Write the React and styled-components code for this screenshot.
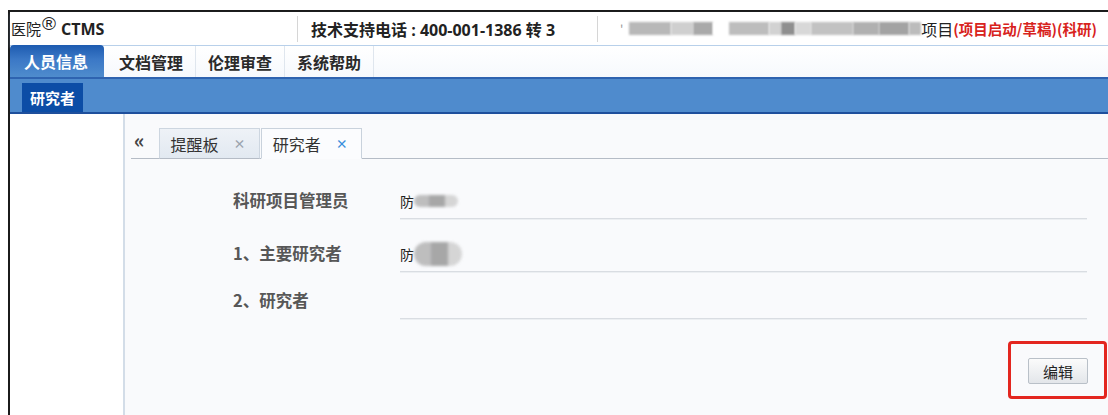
import React from "react";
import styled, { createGlobalStyle } from "styled-components";

const cjk = `"Noto Sans CJK SC", "Noto Sans", sans-serif`;

const GlobalStyle = createGlobalStyle`
  html, body {
    margin: 0;
    padding: 0;
    background: #ffffff;
    font-family: ${cjk};
    overflow: hidden;
  }
`;

// Outer window frame
const Frame = styled.div`
  margin: 10px 0 0 8px;
  border-top: 2px solid #1b1b1b;
  border-left: 2px solid #1b1b1b;
  height: 403px;
  display: flex;
  flex-direction: column;
  background: #fff;
`;

// Top header bar
const Header = styled.div`
  height: 33px;
  display: flex;
  align-items: center;
  border-bottom: 1px solid #b8d0ea;
  box-shadow: 0 2px 3px rgba(150, 185, 225, 0.35);
  white-space: nowrap;
`;

const Brand = styled.div`
  width: 286px;
  display: flex;
  align-items: baseline;
  color: #222;
  font-size: 15px;
  padding-left: 1px;
`;

const Reg = styled.span`
  font-family: "Liberation Sans", sans-serif;
  font-size: 19px;
  line-height: 0;
  margin: 0 5px 0 1px;
  position: relative;
  top: -5px;
`;

const Ctms = styled.b`
  font-family: "Open Sans", ${cjk};
  font-size: 16px;
  font-weight: 700;
`;

const Divider = styled.div`
  width: 1px;
  height: 26px;
  background: #d6d6d6;
`;

const Hotline = styled.div`
  width: 286px;
  padding-left: 13px;
  font-family: "Open Sans", ${cjk};
  font-size: 16px;
  font-weight: 700;
  color: #222;
`;

const Project = styled.div`
  flex: 1;
  display: flex;
  align-items: center;
  padding-left: 22px;
  color: #222;
  font-size: 16px;
`;

const Tick = styled.span`
  color: #999;
  font-size: 12px;
  margin-right: 6px;
`;

const Smudge = styled.span`
  display: inline-block;
  width: ${(p) => p.w}px;
  height: 13px;
  background: ${(p) => p.c};
  filter: blur(1.2px);
`;

const Status = styled.span`
  color: #d8231d;
  font-size: 14.5px;
  font-weight: 700;
  align-self: flex-end;
  margin-bottom: 2px;
`;

// Module tabs
const TabRow = styled.div`
  height: 31px;
  display: flex;
  align-items: flex-end;
  background: linear-gradient(#ffffff, #f6f9fd);
`;

const ModuleTab = styled.div`
  height: ${(p) => (p.active ? 32 : 31)}px;
  padding: 0 ${(p) => (p.active ? 16 : 12)}px 0 ${(p) => (p.active ? 14 : 12)}px;
  margin-right: ${(p) => (p.active ? 3 : 0)}px;
  display: flex;
  align-items: center;
  font-size: 16px;
  font-weight: 700;
  color: ${(p) => (p.active ? "#fff" : "#2a2a2a")};
  background: ${(p) =>
    p.active ? "linear-gradient(#1d5bb0, #3b78c6 45%, #4f8ccd)" : "transparent"};
  border-radius: ${(p) => (p.active ? "4px 4px 0 0" : "0")};
  border-right: ${(p) => (p.active ? "none" : "1px solid #dfe6ee")};
`;

const BlueBand = styled.div`
  height: 33px;
  background: #4f8bcd;
  border-top: 2px solid #2e63b0;
  border-bottom: 2px solid #1e4f9c;
  display: flex;
  align-items: flex-end;
  padding-left: 12px;
`;

const SubNav = styled.div`
  height: 29px;
  padding: 0 8px;
  background: #0c4da6;
  color: #fff;
  font-size: 15px;
  font-weight: 700;
  display: flex;
  align-items: center;
`;

// Body
const Body = styled.div`
  flex: 1;
  display: flex;
`;

const Sidebar = styled.div`
  width: 113px;
  border-right: 2px solid #d3dde8;
  background: #fff;
`;

const Main = styled.div`
  flex: 1;
  background: #f9fafc;
  display: flex;
  flex-direction: column;
`;

const TabStrip = styled.div`
  margin: 14px 0 0 6px;
  height: 30px;
  display: flex;
  align-items: flex-end;
  border-bottom: 1px solid #b5bcc6;
`;

const Collapse = styled.span`
  align-self: flex-start;
  color: #444;
  font-size: 20px;
  font-weight: 700;
  line-height: 14px;
  margin: 5px 14px 0 3px;
`;

const PageTab = styled.div`
  height: 29px;
  padding: 0 13px 0 11px;
  margin-bottom: -1px;
  display: flex;
  align-items: center;
  gap: 15px;
  font-size: 16px;
  color: #333;
  background: ${(p) => (p.active ? "#fbfcfe" : "linear-gradient(#eef2f7, #e2e9f1)")};
  border: 1px solid ${(p) => (p.active ? "#c9d2dc" : "#cdd6e0")};
  border-bottom-color: ${(p) => (p.active ? "#fbfcfe" : "#b5bcc6")};
  margin-right: 1px;
`;

const Close = styled.span`
  font-size: 12px;
  font-weight: 700;
  color: ${(p) => (p.active ? "#3a8fdc" : "#9aa3ad")};
`;

const Form = styled.div`
  padding: 0 21px 0 108px;
`;

const Row = styled.div`
  height: ${(p) => p.h}px;
  display: flex;
  align-items: flex-end;
`;

const Label = styled.div`
  width: 167px;
  font-size: 16.5px;
  font-weight: 700;
  color: #575757;
  line-height: 22px;
  padding-bottom: 8px;
`;

const Value = styled.div`
  flex: 1;
  height: 34px;
  border-bottom: 1px solid #d9dde2;
  box-shadow: 0 1px 0 #eceff2;
  display: flex;
  align-items: center;
  font-size: 14px;
  color: #222;
`;

const Blur = styled.span`
  display: inline-block;
  width: ${(p) => p.w}px;
  height: ${(p) => p.h}px;
  border-radius: ${(p) => p.h / 2}px;
  background: linear-gradient(90deg, #b4b4b4 0 35%, #999 35% 70%, #cfcfcf 70%);
  filter: blur(1.5px);
  opacity: 0.85;
`;

const Actions = styled.div`
  display: flex;
  justify-content: flex-end;
  padding: 22px 1px 0 0;
`;

const Highlight = styled.div`
  border: 3px solid #e3261f;
  border-radius: 4px;
  padding: 14px 16px 12px 17px;
`;

const EditButton = styled.button`
  width: 60px;
  height: 26px;
  font-family: ${cjk};
  font-size: 15px;
  color: #222;
  border: 1px solid #b9c0c8;
  border-radius: 2px;
  background: linear-gradient(#fbfbfb, #e3e6ea);
  padding: 0;
`;

const modules = ["人员信息", "文档管理", "伦理审查", "系统帮助"];

const people = [
  { label: "科研项目管理员", h: 60, name: "防", blur: [44, 12] },
  { label: "1、主要研究者", h: 53, name: "防", blur: [48, 24] },
  { label: "2、研究者", h: 47 },
];

const smudges = [
  [42, "#b8b8b8"], [22, "#cfcfcf"], [20, "#a9a9a9"], [16, "#fff"],
  [40, "#bdbdbd"], [12, "#d2d2d2"], [14, "#8f8f8f"], [16, "#d8d8d8"],
  [42, "#c2c2c2"], [26, "#b0b0b0"], [30, "#a3a3a3"], [12, "#bcbcbc"],
];

export default function App() {
  return (
    <>
      <GlobalStyle />
      <Frame>
        <Header>
          <Brand>
            医院<Reg>®</Reg>
            <Ctms>CTMS</Ctms>
          </Brand>
          <Divider />
          <Hotline>技术支持电话 : 400-001-1386 转 3</Hotline>
          <Divider />
          <Project>
            <Tick>'</Tick>
            {smudges.map(([w, c], i) => (
              <Smudge key={i} w={w} c={c} />
            ))}
            项目
            <Status>(项目启动/草稿)(科研)</Status>
          </Project>
        </Header>

        <TabRow>
          {modules.map((m, i) => (
            <ModuleTab key={m} active={i === 0}>
              {m}
            </ModuleTab>
          ))}
        </TabRow>

        <BlueBand>
          <SubNav>研究者</SubNav>
        </BlueBand>

        <Body>
          <Sidebar />
          <Main>
            <TabStrip>
              <Collapse>«</Collapse>
              <PageTab>
                提醒板<Close>×</Close>
              </PageTab>
              <PageTab active>
                研究者<Close active>×</Close>
              </PageTab>
            </TabStrip>

            <Form>
              {people.map((p) => (
                <Row key={p.label} h={p.h}>
                  <Label>{p.label}</Label>
                  <Value>
                    {p.name}
                    {p.blur && <Blur w={p.blur[0]} h={p.blur[1]} />}
                  </Value>
                </Row>
              ))}
            </Form>

            <Actions>
              <Highlight>
                <EditButton>编辑</EditButton>
              </Highlight>
            </Actions>
          </Main>
        </Body>
      </Frame>
    </>
  );
}
